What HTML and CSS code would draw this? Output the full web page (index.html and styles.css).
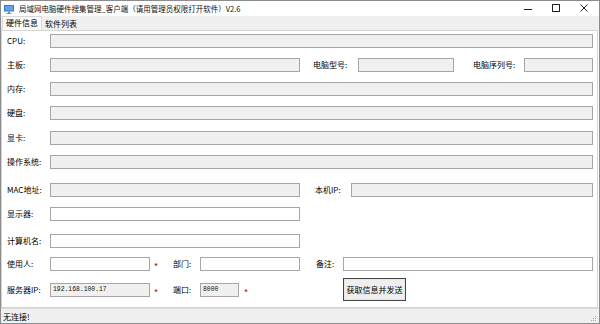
FILE: index.html
```html
<!DOCTYPE html>
<html lang="zh">
<head>
<meta charset="utf-8">
<link rel="stylesheet" href="styles.css">
</head>
<body>
<div class="window">
  <div class="titlebar">
    <svg class="app-icon" width="10" height="10" viewBox="0 0 10 10">
      <rect x="0" y="1" width="10" height="6.5" fill="#3b78c9"/>
      <rect x="1" y="2" width="8" height="4.5" fill="#5fa2e6"/>
      <rect x="4" y="7.5" width="2" height="1.5" fill="#8a8a8a"/>
      <rect x="2.5" y="9" width="5" height="1" fill="#8a8a8a"/>
    </svg>
    <span class="title">局域网电脑硬件搜集管理_客户端（请用管理员权限打开软件）V2.6</span>
    <div class="controls">
      <svg class="ctl" width="28" height="15" viewBox="0 0 28 15"><line x1="10" y1="8.5" x2="18" y2="8.5" stroke="#222" stroke-width="1"/></svg>
      <svg class="ctl" width="28" height="15" viewBox="0 0 28 15"><rect x="10.5" y="3.5" width="7" height="7" fill="none" stroke="#222" stroke-width="1"/></svg>
      <svg class="ctl" width="28" height="15" viewBox="0 0 28 15"><path d="M10.5 3.5 L17.5 10.5 M17.5 3.5 L10.5 10.5" stroke="#222" stroke-width="1"/></svg>
    </div>
  </div>
  <div class="tabs">
    <div class="tab active">硬件信息</div>
    <div class="tab">软件列表</div>
  </div>
  <div class="page">
    <div class="row">
      <span class="label">CPU:</span>
      <div class="field ro grow"></div>
    </div>
    <div class="row">
      <span class="label">主板:</span>
      <div class="field ro w250"></div>
      <span class="label l-model">电脑型号:</span>
      <div class="field ro w96"></div>
      <span class="label l-serial">电脑序列号:</span>
      <div class="field ro grow"></div>
    </div>
    <div class="row">
      <span class="label">内存:</span>
      <div class="field ro grow"></div>
    </div>
    <div class="row">
      <span class="label">硬盘:</span>
      <div class="field ro grow"></div>
    </div>
    <div class="row gap-plus1">
      <span class="label">显卡:</span>
      <div class="field ro grow"></div>
    </div>
    <div class="row">
      <span class="label">操作系统:</span>
      <div class="field ro grow"></div>
    </div>
    <div class="row gap-plus4">
      <span class="label">MAC地址:</span>
      <div class="field ro w250"></div>
      <span class="label l-ip">本机IP:</span>
      <div class="field ro grow"></div>
    </div>
    <div class="row">
      <span class="label">显示器:</span>
      <div class="field w250"></div>
    </div>
    <div class="row gap-plus3">
      <span class="label">计算机名:</span>
      <div class="field w250"></div>
    </div>
    <div class="row gap-minus1">
      <span class="label">使用人:</span>
      <div class="field w100"></div>
      <span class="star">*</span>
      <span class="label l-short">部门:</span>
      <div class="field w100"></div>
      <span class="label l-note">备注:</span>
      <div class="field grow"></div>
    </div>
    <div class="row gap-plus2">
      <span class="label">服务器IP:</span>
      <div class="field ro w100 mono">192.168.100.17</div>
      <span class="star">*</span>
      <span class="label l-short">端口:</span>
      <div class="field ro w39 mono">8000</div>
      <span class="star star-port">*</span>
      <button class="btn">获取信息并发送</button>
    </div>
  </div>
  <div class="status">
    <span>无连接!</span>
    <svg class="grip" width="6" height="6" viewBox="0 0 6 6">
      <rect x="4" y="0" width="1" height="1" fill="#a0a0a0"/>
      <rect x="2" y="2" width="1" height="1" fill="#a0a0a0"/>
      <rect x="4" y="2" width="1" height="1" fill="#a0a0a0"/>
      <rect x="0" y="4" width="1" height="1" fill="#a0a0a0"/>
      <rect x="2" y="4" width="1" height="1" fill="#a0a0a0"/>
      <rect x="4" y="4" width="1" height="1" fill="#a0a0a0"/>
    </svg>
  </div>
</div>
</body>
</html>
```
FILE: styles.css
```css
html, body {
  margin: 0;
  padding: 0;
  background: #ffffff;
}
body {
  font-family: "Noto Sans CJK SC", "Liberation Sans", sans-serif;
  font-size: 8px;
  color: #000;
}
.window {
  width: 600px;
  height: 324px;
  box-sizing: border-box;
  border: 1px solid #8c8c8c;
  display: flex;
  flex-direction: column;
  background: #fff;
}
.titlebar {
  height: 15px;
  display: flex;
  align-items: center;
  background: #fff;
  flex-shrink: 0;
}
.app-icon {
  margin-left: 3px;
  margin-right: 5px;
}
.title {
  font-size: 7.5px;
  line-height: 15px;
  color: #111;
  white-space: nowrap;
}
.controls {
  margin-left: auto;
  display: flex;
  margin-right: 1px;
}
.ctl {
  display: block;
}
.tabs {
  height: 14px;
  background: #f0f0f0;
  display: flex;
  align-items: flex-end;
  flex-shrink: 0;
  padding-left: 1px;
}
.tab {
  height: 13px;
  line-height: 13px;
  padding: 0 3px;
  font-size: 8px;
  box-sizing: border-box;
}
.tab.active {
  background: #fbfbfb;
  border: 1px solid #d9d9d9;
  border-bottom: none;
  height: 14px;
  line-height: 12px;
  padding: 0 3px;
}
.page {
  flex: 1;
  border: 1px solid #d4d4d4;
  margin-right: 1px;
  background: #fff;
  padding: 3px 4px 0 5px;
  display: flex;
  flex-direction: column;
  gap: 10px;
}
.row {
  height: 14px;
  display: flex;
  align-items: center;
}
.gap-plus1 { margin-top: 1px; }
.gap-plus2 { margin-top: 2px; }
.gap-plus3 { margin-top: 3px; }
.gap-plus4 { margin-top: 4px; }
.gap-minus1 { margin-top: -1px; }
.label {
  width: 43px;
  flex-shrink: 0;
  white-space: nowrap;
  line-height: 14px;
}
.l-model { margin-left: 13px; width: 45px; }
.l-serial { margin-left: 19px; width: 51px; }
.l-ip { margin-left: 15px; width: 36px; }
.l-short { width: 27px; }
.l-note { margin-left: 16px; width: 27px; }
.field {
  height: 14px;
  box-sizing: border-box;
  border: 1px solid #a6a6a6;
  background: #fff;
  flex-shrink: 0;
}
.field.ro {
  background: #f0f0f0;
}
.grow { flex: 1; }
.w250 { width: 250px; }
.w96 { width: 96px; }
.w100 { width: 100px; }
.w39 { width: 39px; }
.mono {
  font-family: "Liberation Mono", "DejaVu Sans Mono", monospace;
  font-size: 6.4px;
  line-height: 12px;
  padding-left: 2px;
  color: #111;
}
.star {
  width: 23px;
  flex-shrink: 0;
  color: #e02020;
  font-weight: bold;
  font-size: 8px;
  line-height: 14px;
  padding-left: 4px;
  box-sizing: border-box;
  padding-top: 3px;
}
.star-port {
  width: 104px;
  padding-left: 5px;
}
.btn {
  width: 63px;
  height: 23px;
  flex-shrink: 0;
  margin: -5px 0 -4px 0;
  padding: 0;
  font-family: "Noto Sans CJK SC", sans-serif;
  font-size: 8px;
  color: #000;
  background: #efefef;
  border: 1px solid #444;
  box-shadow: inset 0 0 0 1px #e8e8e8;
}
.status {
  height: 14px;
  flex-shrink: 0;
  background: #f0f0f0;
  border-top: 1px solid #dadada;
  display: flex;
  align-items: center;
  padding-left: 2px;
  padding-right: 2px;
  font-size: 8px;
}
.grip {
  margin-left: auto;
  align-self: flex-end;
  margin-bottom: 1px;
}
```
